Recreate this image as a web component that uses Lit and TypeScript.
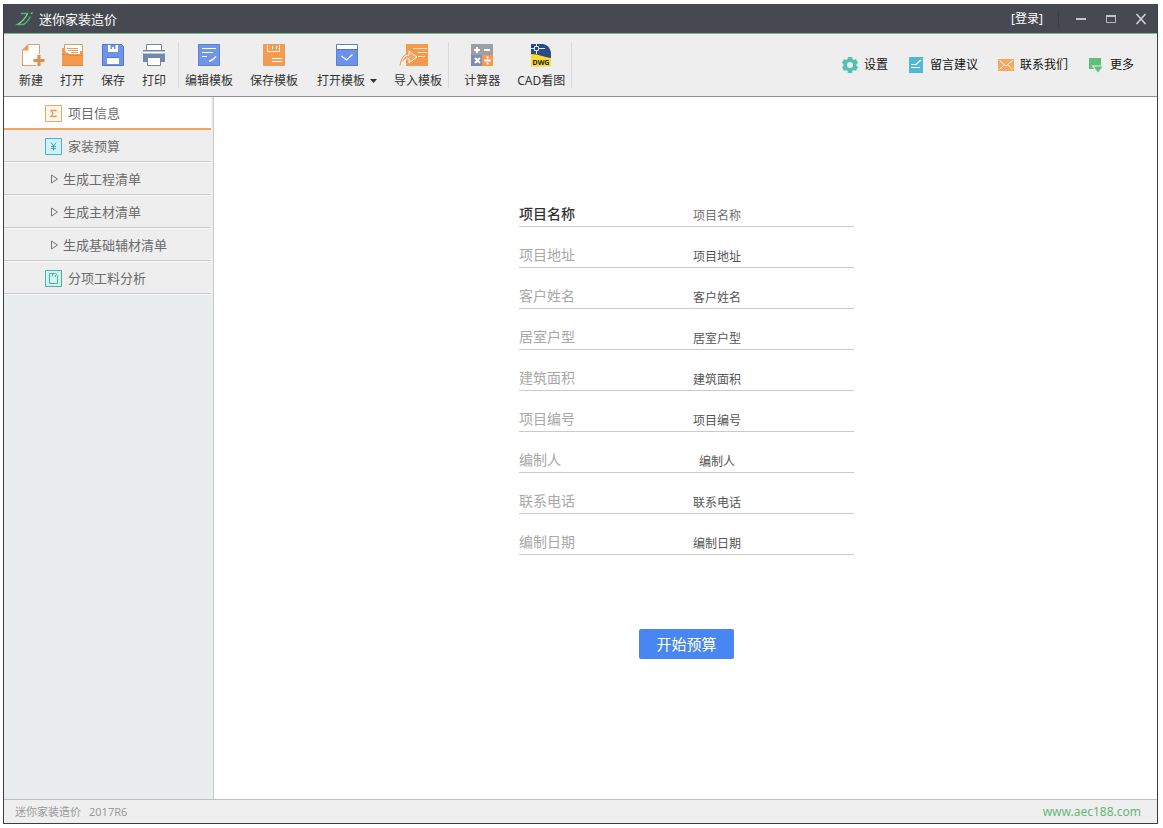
import { LitElement, html, css, svg, nothing, TemplateResult } from "lit";
import { customElement, state } from "lit/decorators.js";
import { classMap } from "lit/directives/class-map.js";

interface Tool {
  label: string;
  icon: TemplateResult;
  menu?: boolean;
}

const groups: { cls: string; tools: Tool[] }[] = [
  {
    cls: "files",
    tools: [
      {
        label: "新建",
        icon: svg`<path d="M9 1.500H20.500V22.500H3.500V7z" fill="#fff" stroke="#dfa06c"/>
          <path d="M3 7.500L9.500 1V7.500z" fill="#ee9a54"/>
          <path d="M17 11h6v4.500h3v5h-3v3.500h-6v-3.500h-3v-5h3z" fill="#eee"/>
          <path d="M18.500 12h3v4h4v3h-4v4h-3v-4h-4v-3h4z" fill="#e08f50"/>`,
      },
      {
        label: "打开",
        icon: svg`<path d="M4.500 8V1.500h18V10" fill="#fff" stroke="#dd9a62"/>
          <path d="M2 5h3v3h17V6h1v17H2z" fill="#f5994c"/>
          <path d="M5 5h15v6H9L5 8z" fill="#fff"/>
          <path d="M7 5.500h11M8 7.500h10M11 9.500h7" stroke="#e8a064"/>
          <path d="M2 11.500h6l2 1h13M2.500 22.500h20.500" stroke="#df8a43" fill="none"/>`,
      },
      {
        label: "保存",
        icon: svg`<path d="M1.500 1.500h19l2 2v19h-21z" fill="#6d93ea" stroke="#5277cd"/>
          <path d="M7 2h10v7H7z" fill="#fff"/><path d="M9.500 2h5v4h-5z" fill="#6d93ea"/>
          <path d="M11 4h2v3h-2z" fill="#fff"/>
          <path d="M6 15h12v6H6z" fill="#fff"/><path d="M6 14.500h12" stroke="#5277cd"/>`,
      },
      {
        label: "打印",
        icon: svg`<path d="M4.500 7V1.500h15V7" fill="#fff" stroke="#7283a3"/>
          <path d="M1 7h22v12H1z" fill="#7487ad"/>
          <path d="M1 9.500h22" stroke="#fff" stroke-width="2"/>
          <path d="M5.500 14.500h13v8h-13z" fill="#fff" stroke="#7283a3"/>`,
      },
    ],
  },
  {
    cls: "templates",
    tools: [
      {
        label: "编辑模板",
        icon: svg`<path d="M1.500 1.500h21v21h-21z" fill="#7096ec" stroke="#5d80cc"/>
          <path d="M5 5.500h14M5 9.500h11M5 13.500h5" stroke="#fff"/>
          <path d="M12 18.500l4-2 3-3" stroke="#fff" stroke-width="1.400" fill="none"/>`,
      },
      {
        label: "保存模板",
        icon: svg`<path d="M1.500 1.500h21v21h-21z" fill="#f69c4e" stroke="#dfa068"/>
          <path d="M5.500 2v6.500h12V2M10.500 3v3M14.500 3v3" stroke="#fff" fill="none"/>
          <path d="M10 15.500h10M10 18.500h10" stroke="#fff"/>`,
      },
      {
        label: "打开模板",
        menu: true,
        icon: svg`<path d="M1.500 1.500h21v21h-21z" fill="#6b92ec" stroke="#5d80cc"/>
          <path d="M2 2h20v4H2z" fill="#fff"/><path d="M2 6.500h20" stroke="#5277cd"/>
          <path d="M6.500 13l5 4 6-5.500" stroke="#fff" stroke-width="1.300" fill="none"/>`,
      },
      {
        label: "导入模板",
        icon: svg`<path d="M0 1h22v22H0z" fill="#f5994c"/>
          <path d="M7 5.500h14M12 9.500h9M12 13.500h7" stroke="#fde0c4"/>
          <path d="M-5.500 22.500C-4 15-1 12 3 12V8l8 6-8 6v-4.500C-1 16-3 18-5.500 22.500z" fill="#f6a765" stroke="#fff"/>
          <path d="M-6 22.500C-4.500 15-2 12 0 11.500" fill="none" stroke="#e58d45"/>`,
      },
    ],
  },
  {
    cls: "extras",
    tools: [
      {
        label: "计算器",
        icon: svg`<path d="M1 1h22v22H1z" fill="#9a9fa8"/><path d="M12 12h11v11H12z" fill="#f6994a"/>
          <path d="M1 12h11v11H1z" fill="#7d8eb2"/>
          <path d="M4 7h6M7 4v6M14 7h6M5 15l5 5M10 15l-5 5M14 17.500h7" stroke="#fff" stroke-width="2"/>
          <path d="M16.500 13.500h2v2h-2zM16.500 19.500h2v2h-2z" fill="#fff"/>`,
      },
      {
        label: "CAD看图",
        icon: svg`<path d="M2 1h12c5 1 8 5 8 10v4H2z" fill="#2b4a86"/>
          <path d="M2 11c8 0 12 3 20 4v8.500H2z" fill="#fadb29"/>
          <path d="M5.500 3.500h4v4h-4zM2 5.500h3M10 5.500h6M7.500 1v2M7.500 8v3" fill="none" stroke="#dfe8f5"/>
          <text x="12" y="21.500" text-anchor="middle" font-size="7" font-weight="700" font-family="Noto Sans, sans-serif" fill="#222">DWG</text>`,
      },
    ],
  },
];

const links: Tool[] = [
  {
    label: "设置",
    icon: svg`<g stroke="#54c0b0" stroke-width="4.500"><path d="M9 1v16"/><path d="M2 5l14 8"/><path d="M16 5L2 13"/></g>
      <circle cx="9" cy="9" r="6.500" fill="#54c0b0"/>
      <circle cx="9" cy="9" r="3" fill="#eee"/>`,
  },
  {
    label: "留言建议",
    icon: svg`<path d="M2 1h14v16H2z" fill="#4fb8d8"/><path d="M4 8.500h5M4 11.500h9" stroke="#fff"/>
      <path d="M9 8.500l5-4.500" stroke="#fff" stroke-width="1.500"/>`,
  },
  {
    label: "联系我们",
    icon: svg`<path d="M1 3h16v12H1z" fill="#f5a862"/>
      <path d="M2.500 4.500L9 10l6.500-5.500M2.500 13.500l4.500-4.500M15.500 13.500L11 9" stroke="#fff" fill="none"/>`,
  },
  {
    label: "更多",
    icon: svg`<path d="M2 2h12v11H2z" fill="#62bf7b"/><path d="M4.500 9.500h13L11 18z" fill="#eee"/>
      <path d="M6.500 10.500h9l-4.500 6z" fill="#62bf7b"/>`,
  },
];

interface NavItem {
  label: string;
  icon?: TemplateResult;
}

const nav: NavItem[] = [
  {
    label: "项目信息",
    icon: svg`<path d="M.5.5h16v16H.5z" fill="#fff6ec" stroke="#eba765"/>
      <path d="M11 6.500v-1H6l2 3-2 3h5v-1" fill="none" stroke="#e39a55" stroke-width="1.300"/>`,
  },
  {
    label: "家装预算",
    icon: svg`<path d="M.5.5h16v16H.5z" fill="#d3f0f6" stroke="#45b3cc"/>
      <path d="M6 4.500l2.500 3.500L11 4.500M8.500 8v4.500M6 8.500h5M6 10.500h5" fill="none" stroke="#2fa5c2"/>`,
  },
  { label: "生成工程清单" },
  { label: "生成主材清单" },
  { label: "生成基础辅材清单" },
  {
    label: "分项工料分析",
    icon: svg`<path d="M.5.5h16v16H.5z" fill="#d5f2ec" stroke="#48b5a4"/>
      <path d="M4.500 3.500h6l2 2v8h-8zM7.500 3.500v3M10.500 5v2" fill="none" stroke="#48b5a4"/>`,
  },
];

const fields = ["项目名称", "项目地址", "客户姓名", "居室户型", "建筑面积", "项目编号", "编制人", "联系电话", "编制日期"];

const shared = css`
  :host {
    display: block;
  }
  button {
    margin: 0;
    padding: 0;
    border: 0;
    background: none;
    color: inherit;
    font: inherit;
    cursor: pointer;
  }
  a {
    color: inherit;
    text-decoration: none;
  }
  svg {
    display: block;
    flex: none;
    overflow: visible;
  }
`;

@customElement("title-bar")
export class TitleBar extends LitElement {
  static styles = [
    shared,
    css`
      .bar {
        display: flex;
        align-items: center;
        height: 28px;
        padding: 0 10px 0 12px;
        background: #464951;
        border-bottom: 1px solid #79b98c;
        color: #fff;
      }
      .name {
        flex: 1;
        margin: 0 0 0 5px;
        font-size: 13px;
        line-height: 20px;
        font-weight: 400;
      }
      .login {
        font-size: 12px;
        line-height: 16px;
        padding-right: 15px;
        border-right: 1px solid #3a3d45;
      }
      .controls {
        display: flex;
        gap: 18px;
        margin-left: 16px;
      }
    `,
  ];

  render() {
    return html`<header class="bar">
      <svg width="18" height="14" viewBox="0 0 18 14" fill="none" aria-hidden="true">
        <path d="M5 1.500H11.500C9.500 6 6 10 1.500 12.500H7.500C10.500 11 12.500 8 14.500 4.500" stroke="#4eb56c" stroke-width="1.500" />
        <path d="M2.500 12C6.500 9.500 9 6 11.500 2" stroke="#8edaa2" />
        <path d="M15 2l1.500-1.500" stroke="#6fcb88" stroke-width="1.500" />
      </svg>
      <h1 class="name">迷你家装造价</h1>
      <button class="login">[登录]</button>
      <div class="controls">
        <button aria-label="最小化">
          <svg width="12" height="12"><path d="M1 6h10" stroke="#c3c5ca" stroke-width="2" /></svg>
        </button>
        <button aria-label="最大化">
          <svg width="12" height="12">
            <path d="M1.500 2.500h9v7h-9z" fill="none" stroke="#b5b8be" />
            <path d="M1 3h10" stroke="#c3c5ca" stroke-width="2" />
          </svg>
        </button>
        <button aria-label="关闭">
          <svg width="12" height="12"><path d="M1.500 1l9 10M10.500 1l-9 10" stroke="#d3d5d9" stroke-width="1.500" /></svg>
        </button>
      </div>
    </header>`;
  }
}

@customElement("tool-bar")
export class ToolBar extends LitElement {
  static styles = [
    shared,
    css`
      .bar {
        display: flex;
        justify-content: space-between;
        height: 62px;
        background: #eee;
        border-bottom: 1px solid #909192;
        color: #333;
        font-size: 12px;
        line-height: 18px;
      }
      .groups,
      .group,
      .links {
        display: flex;
        align-items: center;
      }
      .group {
        gap: 17px;
        height: 46px;
        padding: 0 6px;
        border-right: 1px solid #dadada;
      }
      .files {
        padding: 0 12px 0 15px;
      }
      .extras {
        padding: 0 6px 0 15px;
      }
      .tool {
        display: flex;
        flex-direction: column;
        align-items: center;
        gap: 5px;
        padding-top: 3px;
        white-space: nowrap;
      }
      .caption {
        display: flex;
        align-items: center;
        gap: 5px;
      }
      .menu {
        padding-left: 2px;
      }
      .links {
        gap: 19px;
        padding-right: 23px;
        color: #111;
      }
      .link {
        display: flex;
        align-items: center;
        gap: 5px;
        white-space: nowrap;
      }
    `,
  ];

  render() {
    return html`<div class="bar">
      <div class="groups">
        ${groups.map(
          (g) => html`<div class="group ${g.cls}">
            ${g.tools.map(
              (t) => html`<button class=${classMap({ tool: true, menu: !!t.menu })}>
                <svg width="24" height="24" viewBox="0 0 24 24" aria-hidden="true">${t.icon}</svg>
                <span class="caption"
                  >${t.label}${t.menu
                    ? html`<svg width="7" height="4" aria-hidden="true"><path d="M0 0h7l-3.500 4z" fill="#333" /></svg>`
                    : nothing}</span
                >
              </button>`,
            )}
          </div>`,
        )}
      </div>
      <nav class="links">
        ${links.map(
          (l) => html`<a class="link" href="#">
            <svg width="18" height="18" viewBox="0 0 18 18" aria-hidden="true">${l.icon}</svg>${l.label}
          </a>`,
        )}
      </nav>
    </div>`;
  }
}

@customElement("side-nav")
export class SideNav extends LitElement {
  @state() private current = 0;

  static styles = [
    shared,
    css`
      :host {
        background: #e9eded;
        border-right: 1px solid #c8caca;
      }
      .nav {
        padding-right: 2px;
        background: #eee;
      }
      .item {
        display: flex;
        align-items: center;
        gap: 6px;
        box-sizing: border-box;
        width: 100%;
        height: 33px;
        padding: 0 0 1px 41px;
        color: #6b6b6b;
        font-size: 13px;
        line-height: 20px;
        white-space: nowrap;
        box-shadow: inset 0 -1px #fafafa, inset 0 -2px #c9caca;
      }
      .child {
        gap: 4px;
        padding-left: 46px;
      }
      .current {
        background: #fff;
        box-shadow: inset 0 -2px #f5a55c;
      }
    `,
  ];

  render() {
    return html`<nav class="nav">
      ${nav.map(
        (n, i) => html`<button
          class=${classMap({ item: true, child: !n.icon, current: i === this.current })}
          @click=${() => (this.current = i)}
        >
          ${n.icon
            ? html`<svg width="17" height="17" aria-hidden="true">${n.icon}</svg>`
            : html`<svg width="9" height="10" aria-hidden="true">
                <path d="M1.500 1l6 4-6 4z" fill="none" stroke="#777" />
              </svg>`}${n.label}
        </button>`,
      )}
    </nav>`;
  }
}

@customElement("project-form")
export class ProjectForm extends LitElement {
  @state() private active = 0;

  static styles = [
    shared,
    css`
      .form {
        display: flex;
        flex-direction: column;
        align-items: center;
        padding: 89px 0 0 2px;
      }
      .fields {
        width: 335px;
      }
      .row {
        display: flex;
        align-items: flex-end;
        box-sizing: border-box;
        height: 41px;
        border-bottom: 1px solid #cacaca;
        color: #a8a8a8;
      }
      .label {
        width: 61px;
        padding-bottom: 2px;
        font-size: 14px;
        line-height: 20px;
      }
      .value {
        flex: 1;
        min-width: 0;
        height: 20px;
        margin: 0;
        padding: 0;
        border: 0;
        outline: 0;
        background: none;
        color: #555;
        font: inherit;
        font-size: 12px;
        line-height: 20px;
        text-align: center;
      }
      .active .label {
        color: #333;
        font-weight: 500;
      }
      .active .value {
        color: #707070;
      }
      .start {
        height: 30px;
        margin-top: 74px;
        padding: 0 17px;
        border-radius: 2px;
        background: #4886f1;
        color: #fff;
        font-size: 15px;
        line-height: 30px;
      }
    `,
  ];

  render() {
    return html`<form class="form" @submit=${(e: Event) => e.preventDefault()}>
      <div class="fields">
        ${fields.map(
          (f, i) => html`<div class=${classMap({ row: true, active: i === this.active })}>
            <label class="label" for="field-${i}">${f}</label>
            <input class="value" id="field-${i}" type="text" .value=${f} @focus=${() => (this.active = i)} />
          </div>`,
        )}
      </div>
      <button class="start" type="submit">开始预算</button>
    </form>`;
  }
}

@customElement("app-root")
export class AppRoot extends LitElement {
  static styles = [
    shared,
    css`
      :host {
        box-sizing: border-box;
        height: 100vh;
        padding: 4px 5px 4px 3px;
        background: #fff;
        font-family: "Noto Sans", "Noto Sans CJK SC", sans-serif;
      }
      .window {
        display: flex;
        flex-direction: column;
        box-sizing: border-box;
        height: 100%;
        border: 1px solid #3b3d42;
        border-top-color: #464951;
      }
      .body {
        flex: 1;
        min-height: 0;
        display: grid;
        grid-template-columns: 210px 1fr;
      }
      .foot {
        display: flex;
        justify-content: space-between;
        align-items: center;
        height: 23px;
        padding: 0 16px 0 11px;
        border-top: 1px solid #bfc1c1;
        background: #efefef;
        color: #9a9a9a;
        font-size: 11px;
        line-height: 16px;
      }
      .version {
        margin-left: 8px;
      }
      .site {
        color: #63b878;
        font-size: 12px;
      }
    `,
  ];

  render() {
    return html`<div class="window">
      <title-bar></title-bar>
      <tool-bar></tool-bar>
      <div class="body">
        <side-nav></side-nav>
        <project-form></project-form>
      </div>
      <footer class="foot">
        <span>迷你家装造价<span class="version">2017R6</span></span>
        <a class="site" href="http://www.aec188.com">www.aec188.com</a>
      </footer>
    </div>`;
  }
}
